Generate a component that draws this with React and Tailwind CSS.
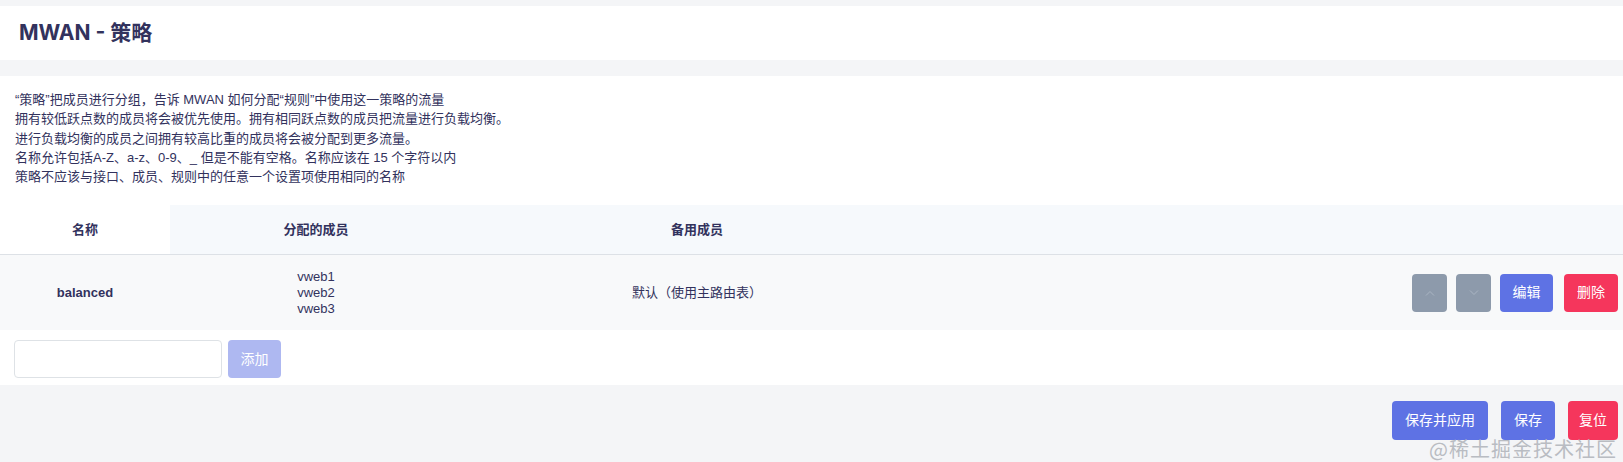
import React from "react";

const notes = [
  "“策略”把成员进行分组，告诉 MWAN 如何分配“规则”中使用这一策略的流量",
  "拥有较低跃点数的成员将会被优先使用。拥有相同跃点数的成员把流量进行负载均衡。",
  "进行负载均衡的成员之间拥有较高比重的成员将会被分配到更多流量。",
  "名称允许包括A-Z、a-z、0-9、_ 但是不能有空格。名称应该在 15 个字符以内",
  "策略不应该与接口、成员、规则中的任意一个设置项使用相同的名称",
];

const Chevron = ({ up }) => (
  <svg width="10" height="6" viewBox="0 0 10 6" fill="none">
    <path
      d={up ? "M1 5.5L5 1.5L9 5.5" : "M1 0.5L5 4.5L9 0.5"}
      stroke="#a9b4c2"
      strokeWidth="1"
    />
  </svg>
);

const App = () => {
  return (
    <div
      className="relative min-h-screen w-full bg-[#f4f5f7] pt-[6px] text-[#32325d]"
      style={{ fontFamily: '"Liberation Sans", "Noto Sans CJK SC", sans-serif' }}
    >
      <header className="flex h-[54px] items-center bg-white px-[19px]">
        <h2
          className="text-[21px] font-bold text-[#32325d]"
          style={{ fontFamily: 'Inter, "Noto Sans CJK SC", sans-serif' }}
        >
          MWAN - 策略
        </h2>
      </header>

      <div className="mt-4 bg-white pb-[7px]">
        <div className="px-[15px] pt-[14px] text-[13px] leading-[19.25px]">
          {notes.map((n) => (
            <div key={n}>{n}</div>
          ))}
        </div>

        {/* table */}
        <div className="mt-[19px]">
          <div className="flex h-[50px] items-center border-b border-[#dde1e6] bg-[#f6f9fc] text-[13px] font-bold">
            <div className="flex h-full w-[170px] items-center justify-center bg-white">名称</div>
            <div className="w-[292px] text-center">分配的成员</div>
            <div className="w-[470px] text-center">备用成员</div>
            <div className="flex-1"></div>
          </div>
          <div className="flex h-[75px] items-center bg-[#f8f9fa] text-[13px]">
            <div className="w-[170px] text-center font-bold">balanced</div>
            <div className="w-[292px] text-center leading-[16px]">
              <div>vweb1</div>
              <div>vweb2</div>
              <div>vweb3</div>
            </div>
            <div className="w-[470px] text-center">默认（使用主路由表）</div>
            <div className="flex flex-1 justify-end gap-[9px] pr-[5px] text-[14px] text-white">
              <button className="flex h-[38px] w-[35px] items-center justify-center rounded-[4px] bg-[#8d9aab]">
                <Chevron up />
              </button>
              <button className="flex h-[38px] w-[35px] items-center justify-center rounded-[4px] bg-[#8d9aab]">
                <Chevron />
              </button>
              <button className="h-[38px] w-[53px] rounded-[4px] bg-[#5e72e4]">编辑</button>
              <button className="ml-[2px] h-[38px] w-[54px] rounded-[4px] bg-[#f5365c]">删除</button>
            </div>
          </div>
        </div>

        <div className="mt-[10px] flex gap-[6px] px-[14px]">
          <input
            type="text"
            className="h-[38px] w-[208px] rounded-[4px] border border-[#dee2e6] bg-white px-2 text-[13px] outline-none"
          />
          <button className="h-[38px] w-[53px] rounded-[4px] bg-[#aeb8f1] text-[14px] text-white">
            添加
          </button>
        </div>
      </div>

      <div className="mt-4 flex justify-end gap-[13px] pr-[5px] text-[14px] text-white">
        <button className="h-[39px] w-[96px] rounded-[4px] bg-[#5e72e4]">保存并应用</button>
        <button className="h-[39px] w-[54px] rounded-[4px] bg-[#5e72e4]">保存</button>
        <button className="h-[39px] w-[50px] rounded-[4px] bg-[#f5365c]">复位</button>
      </div>

      <div
        className="pointer-events-none absolute right-[6px] top-[439px] text-[20px] leading-none tracking-[1px] text-[#b9bcc2]"
        style={{ fontFamily: '"Noto Sans CJK SC", serif' }}
      >
        @稀土掘金技术社区
      </div>
    </div>
  );
};

export default App;
